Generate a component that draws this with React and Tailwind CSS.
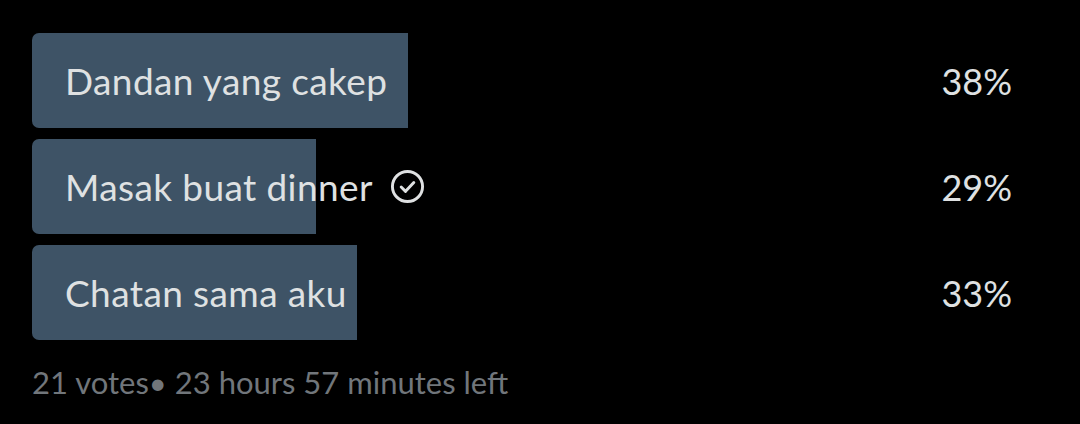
import React from "react";

const options = [
  { label: "Dandan yang cakep", pct: 38, width: "w-[376px]" },
  { label: "Masak buat dinner", pct: 29, width: "w-[284px]", picked: true },
  { label: "Chatan sama aku", pct: 33, width: "w-[325px]" },
];

const CheckCircle = () => (
  <svg width="35" height="35" viewBox="0 0 36 36" fill="none" className="ml-[17px]">
    <circle cx="18" cy="18" r="15.5" stroke="#dfe1e2" strokeWidth="3" />
    <path d="M11.5 18.5l4.5 4.5 8.5-9" stroke="#dfe1e2" strokeWidth="3" strokeLinecap="round" strokeLinejoin="round" />
  </svg>
);

const App = () => {
  return (
    <div className="w-[1080px] h-[424px] bg-black font-['Lato',sans-serif] px-[32px] pt-[33px]">
      <div className="flex flex-col gap-[11px] w-[980px]">
        {options.map((o) => (
          <div key={o.label} className="relative h-[95px] flex items-center justify-between">
            <div className={`absolute left-0 top-0 h-full ${o.width} bg-[#3e5366] rounded-l-[7px]`} />
            <div className="relative flex items-center pl-[33px] text-[37px] tracking-[0.4px] text-[#dfe1e2]">
              {o.label}
              {o.picked && <CheckCircle />}
            </div>
            <div className="relative text-[36px] text-[#dfe1e2]">{o.pct}%</div>
          </div>
        ))}
      </div>
      <div className="mt-[27px] text-[31px] text-[#71767b] leading-none">
        21 votes• 23 hours 57 minutes left
      </div>
    </div>
  );
};

export default App;
